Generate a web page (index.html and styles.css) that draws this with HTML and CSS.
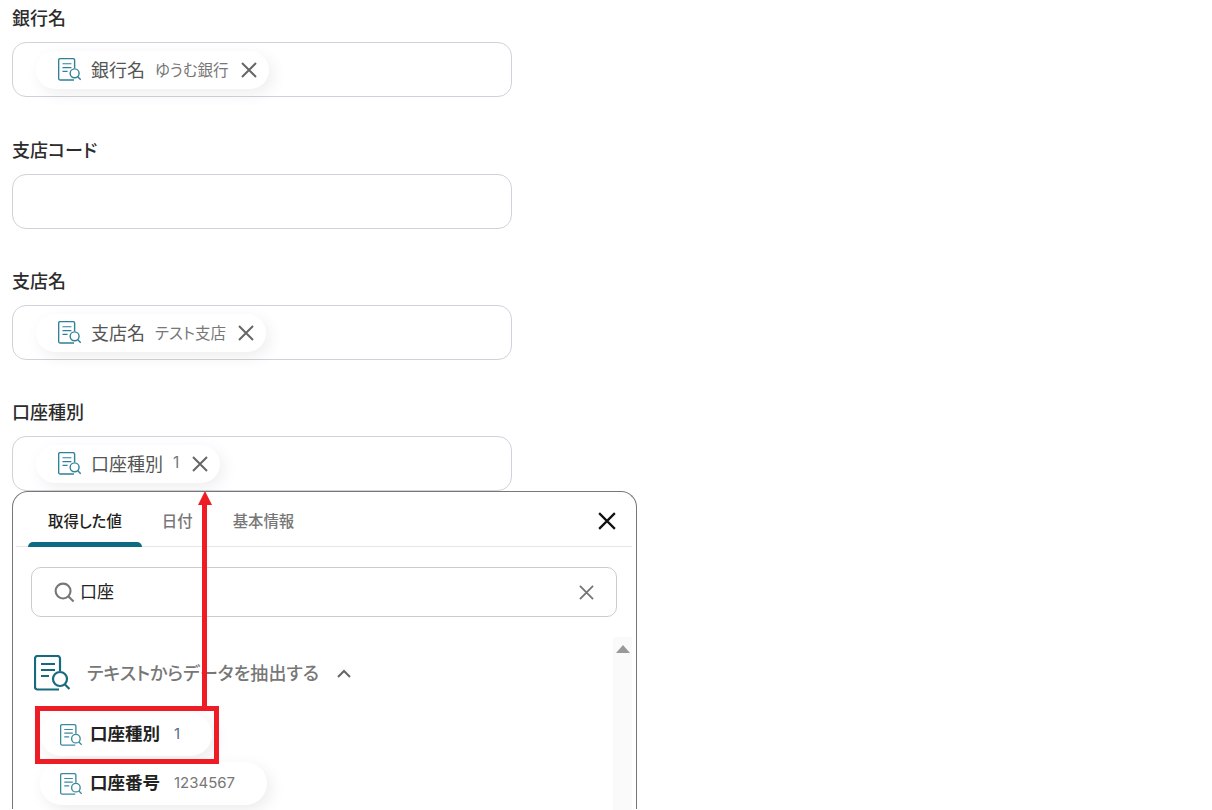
FILE: index.html
```html
<!DOCTYPE html>
<html lang="ja">
<head>
<meta charset="utf-8">
<title>フォーム</title>
<link rel="stylesheet" href="styles.css">
</head>
<body>
<svg class="defs" width="0" height="0" aria-hidden="true">
  <symbol id="doc" viewBox="0 0 36 36">
    <path d="M26 16V3.500A2.500 2.500 0 0 0 23.500 1H3.500A2.500 2.500 0 0 0 1 3.500V32A2.500 2.500 0 0 0 3.500 34.500H25" fill="none" stroke="currentColor" stroke-width="2.200"/>
    <path d="M7 9H21M7 15H21M7 21H15" fill="none" stroke="currentColor" stroke-width="1.800"/>
    <circle cx="26" cy="24" r="7" fill="#fff" stroke="currentColor" stroke-width="2.200"/>
    <path d="M31 29.500L35.500 34" fill="none" stroke="currentColor" stroke-width="2.200"/>
  </symbol>
  <symbol id="x" viewBox="0 0 16 16">
    <path d="M1 1L15 15M15 1L1 15" fill="none" stroke="currentColor" stroke-width="2"/>
  </symbol>
</svg>

<main class="page">
  <section class="field">
    <h2 class="label">銀行名</h2>
    <div class="input">
      <span class="chip">
        <svg class="chip-icon"><use href="#doc"/></svg>
        <span class="chip-name">銀行名</span>
        <span class="chip-value">ゆうむ銀行</span>
        <svg class="chip-x"><use href="#x"/></svg>
      </span>
    </div>
  </section>

  <section class="field">
    <h2 class="label">支店コード</h2>
    <div class="input"></div>
  </section>

  <section class="field">
    <h2 class="label">支店名</h2>
    <div class="input">
      <span class="chip">
        <svg class="chip-icon"><use href="#doc"/></svg>
        <span class="chip-name">支店名</span>
        <span class="chip-value">テスト支店</span>
        <svg class="chip-x"><use href="#x"/></svg>
      </span>
    </div>
  </section>

  <section class="field">
    <h2 class="label">口座種別</h2>
    <div class="input">
      <span class="chip">
        <svg class="chip-icon"><use href="#doc"/></svg>
        <span class="chip-name">口座種別</span>
        <span class="chip-value chip-value-num">1</span>
        <svg class="chip-x"><use href="#x"/></svg>
      </span>
    </div>

    <div class="popup">
      <div class="tabs">
        <span class="tab tab-active">取得した値</span>
        <span class="tab">日付</span>
        <span class="tab">基本情報</span>
        <svg class="popup-close"><use href="#x"/></svg>
      </div>

      <div class="search">
        <svg class="search-icon" viewBox="0 0 22 22">
          <circle cx="9.500" cy="9.500" r="7.800" fill="none" stroke="currentColor" stroke-width="2.200"/>
          <path d="M15.200 15.200L20.500 20.500" fill="none" stroke="currentColor" stroke-width="2.200"/>
        </svg>
        <span class="search-text">口座</span>
        <svg class="search-clear"><use href="#x"/></svg>
      </div>

      <div class="results">
        <div class="list">
          <div class="group">
            <svg class="group-icon"><use href="#doc"/></svg>
            <span class="group-title">テキストからデータを抽出する</span>
            <svg class="chevron" viewBox="0 0 14 9">
              <path d="M1 8L7 2L13 8" fill="none" stroke="currentColor" stroke-width="2"/>
            </svg>
          </div>
          <div class="option">
            <svg class="option-icon"><use href="#doc"/></svg>
            <span class="option-name">口座種別</span>
            <span class="option-value option-value-first">1</span>
          </div>
          <div class="option">
            <svg class="option-icon"><use href="#doc"/></svg>
            <span class="option-name">口座番号</span>
            <span class="option-value">1234567</span>
          </div>
        </div>
        <div class="scrollbar"><span class="scroll-up"></span></div>
      </div>
    </div>
  </section>

  <div class="highlight"></div>
  <div class="arrow-line"></div>
  <div class="arrow-head"></div>
</main>
</body>
</html>
```
FILE: styles.css
```css
* { box-sizing: border-box; }

html, body {
  margin: 0;
  height: 100%;
  overflow: hidden;
  background: #fff;
}

body {
  font-family: "Noto Sans CJK JP", "Noto Sans", sans-serif;
  font-feature-settings: "palt";
  color: #333;
}

.defs { position: absolute; }

.page {
  position: relative;
  height: 810px;
  overflow: hidden;
  padding: 7.4px 0 0 12px;
  display: flex;
  flex-direction: column;
  gap: 41.33px;
}

.label {
  margin: 0 0 11px;
  height: 24px;
  font-size: 18px;
  line-height: 20px;
  font-weight: 500;
  color: #2c2c2c;
}

.input {
  width: 500px;
  height: 55px;
  border: 1px solid #cfd2da;
  border-radius: 14px;
  padding: 8px 0 0 23px;
}

.chip {
  display: inline-flex;
  align-items: center;
  height: 38px;
  padding: 0 12px 0 22px;
  border-radius: 19px;
  background: #fff;
  box-shadow: 4px 5px 16px rgba(0, 0, 0, 0.07);
}

.chip-icon {
  width: 23px;
  height: 23px;
  margin-bottom: 1px;
  flex: none;
  color: #2f8197;
}

.chip-name {
  margin: 0 0 3px 10px;
  font-size: 18px;
  line-height: 22px;
  color: #555;
}

.chip-value {
  margin: 0 0 2px 10px;
  font-size: 15.500px;
  line-height: 22px;
  color: #777;
}

.chip-value-num { font-family: Inter, sans-serif; }

.chip-x {
  width: 16px;
  height: 16px;
  margin: 0 0 1px 12.500px;
  flex: none;
  color: #666;
}

.popup {
  width: 625px;
  height: 318px;
  padding: 0 4px 0 3px;
  border: 1px solid #777;
  border-bottom: 0;
  border-radius: 16px 16px 0 0;
  background: #fff;
  position: relative;
}

.tabs {
  display: flex;
  align-items: center;
  height: 55px;
  padding-left: 12px;
  border-bottom: 1px solid #e6e6e6;
  position: relative;
}

.tab {
  height: 55px;
  padding: 0 20px;
  font-size: 15.400px;
  line-height: 57px;
  font-weight: 500;
  color: #777;
  white-space: nowrap;
}

.tab-active {
  color: #222;
  position: relative;
}

.tab-active::after {
  content: "";
  position: absolute;
  left: 0;
  right: 0;
  bottom: 0;
  height: 5px;
  border-radius: 5px 5px 0 0;
  background: #0b6b82;
}

.popup-close {
  width: 18px;
  height: 18px;
  margin: 4px 16px 0 auto;
  color: #111;
}

.search {
  display: flex;
  align-items: center;
  width: 586px;
  height: 50px;
  margin: 20px 0 0 15px;
  padding-left: 22px;
  border: 1px solid #ccc;
  border-radius: 10px;
}

.search-icon {
  width: 21px;
  height: 21px;
  flex: none;
  color: #777;
}

.search-text {
  margin: 0 0 3px 5px;
  font-size: 17px;
  line-height: 24px;
  color: #222;
}

.search-clear {
  width: 15px;
  height: 15px;
  margin-left: auto;
  margin-right: 22px;
  color: #777;
}

.results {
  display: flex;
  margin-top: 20px;
}

.list {
  flex: 1;
  padding: 18px 0 0 18px;
}

.group {
  display: flex;
  align-items: center;
  height: 36px;
  margin-bottom: 22px;
}

.group-icon {
  width: 36px;
  height: 36px;
  flex: none;
  color: #17697f;
}

.group-title {
  margin: 0 0 2px 17px;
  font-size: 18px;
  letter-spacing: 0.07px;
  line-height: 24px;
  font-weight: 500;
  color: #777;
  white-space: nowrap;
}

.chevron {
  width: 14px;
  height: 9px;
  margin-left: 18px;
  flex: none;
  color: #666;
}

.option {
  display: flex;
  align-items: center;
  width: max-content;
  height: 43px;
  margin: 0 0 6px 6px;
  padding: 0 32px 0 20px;
  border-radius: 22px;
  background: #fff;
  box-shadow: 4px 5px 16px rgba(0, 0, 0, 0.08);
}

.option-icon {
  width: 22px;
  height: 22px;
  flex: none;
  color: #3a8aa0;
}

.option-name {
  margin: 0 0 3px 8px;
  font-size: 17.500px;
  line-height: 22px;
  font-weight: 700;
  color: #222;
}

.option-value {
  margin: 0 0 2px 14px;
  font-family: Inter, sans-serif;
  font-size: 15px;
  line-height: 22px;
  color: #777;
}

.option-value-first { color: #5a6b8c; }

.scrollbar {
  width: 19px;
  height: 173px;
  flex: none;
  background: #fafafa;
  display: flex;
  justify-content: center;
  padding-top: 8px;
}

.scroll-up {
  width: 0;
  height: 0;
  border-left: 7px solid transparent;
  border-right: 7px solid transparent;
  border-bottom: 8px solid #999;
}

/* Annotation drawn over the screenshot */
.highlight {
  position: absolute;
  left: 35px;
  top: 706px;
  width: 184px;
  height: 58px;
  border: 5px solid #ee1c25;
}

.arrow-line {
  position: absolute;
  left: 202px;
  top: 505px;
  width: 5px;
  height: 202px;
  background: #ee1c25;
}

.arrow-head {
  position: absolute;
  left: 198px;
  top: 491px;
  width: 0;
  height: 0;
  border-left: 7px solid transparent;
  border-right: 7px solid transparent;
  border-bottom: 14px solid #ee1c25;
}
```
